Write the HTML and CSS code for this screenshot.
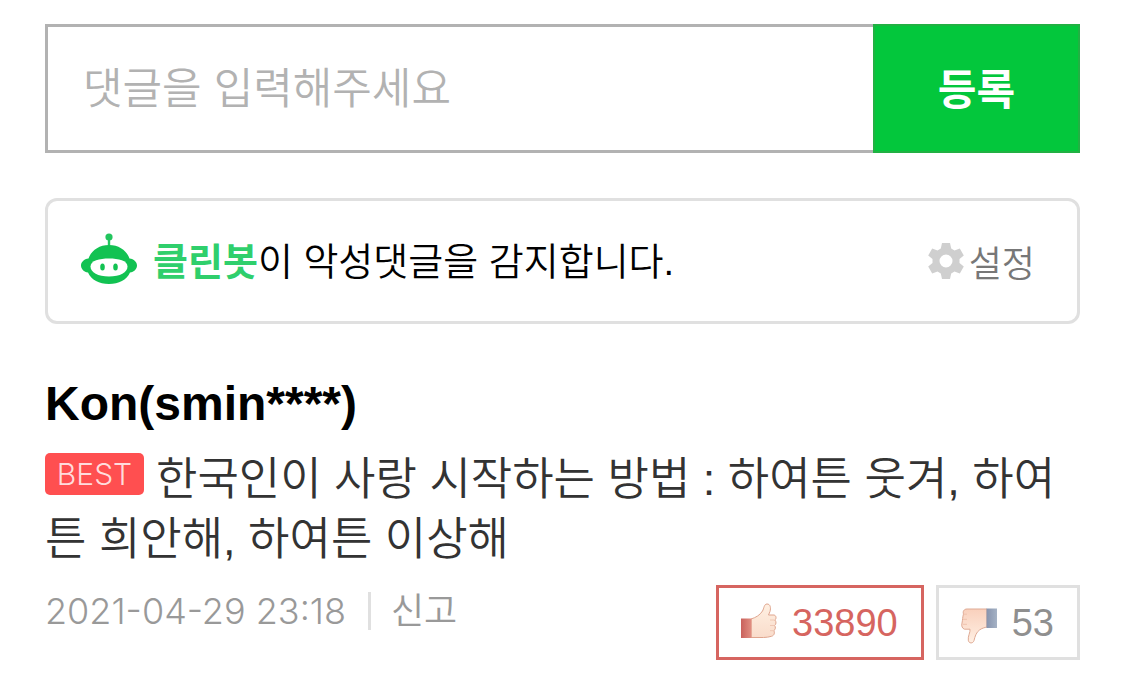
FILE: index.html
```html
<!DOCTYPE html>
<html lang="ko">
<head>
<meta charset="utf-8">
<meta name="viewport" content="width=device-width, initial-scale=1">
<title>댓글</title>
<link rel="stylesheet" href="styles.css">
</head>
<body>
<main class="comments">
  <form class="write">
    <input class="write-input" type="text" placeholder="댓글을 입력해주세요" aria-label="댓글">
    <button class="write-submit" type="button">등록</button>
  </form>

  <section class="cleanbot">
    <svg class="bot-icon" viewBox="0 0 58 52" aria-hidden="true">
      <circle cx="29" cy="4" r="3.6" fill="#22c55e"/>
      <path d="M29 5v10" stroke="#22c55e" stroke-width="2.4"/>
      <path d="M29 12c10.500 0 18 6 20.500 13.500 4.500.5 7.500 3.500 7.500 7s-3 6.500-7 7C46.500 47 39 51 29 51S11.500 47 8 39.500c-4-.5-7-3.500-7-7s3-6.500 7.500-7C11 18 18.500 12 29 12z" fill="#12c252"/>
      <path d="M29 25.500c9.500 0 18.500 2 18.500 8S40 43.500 29 43.500 10.500 39.500 10.500 33.500s9-8 18.500-8z" fill="#fff"/>
      <ellipse cx="22.500" cy="34" rx="2.300" ry="3.600" fill="#12c252"/>
      <ellipse cx="35.500" cy="34" rx="2.300" ry="3.600" fill="#12c252"/>
    </svg>
    <p class="cleanbot-text"><strong class="cleanbot-name">클린봇</strong>이 악성댓글을 감지합니다.</p>
    <button class="settings" type="button">
      <svg class="gear-icon" viewBox="0 0 36 38" aria-hidden="true">
        <path fill="#cfcfcf" fill-rule="evenodd" d="M14 1h8l1.200 5.600 3.300 1.900 5.300-1.900 4 7-4.300 3.500v3.800l4.300 3.500-4 7-5.300-1.900-3.300 1.900L22 37h-8l-1.200-5.600-3.300-1.900-5.300 1.900-4-7 4.300-3.500v-3.800L.2 13.600l4-7 5.300 1.900 3.300-1.900zM18 12.500a6.500 6.500 0 1 0 0 13 6.500 6.500 0 0 0 0-13z"/>
      </svg>
      <span>설정</span>
    </button>
  </section>

  <article class="comment">
    <h2 class="author">Kon(smin****)</h2>
    <p class="body"><span class="best">BEST</span>한국인이 사랑 시작하는 방법 : 하여튼 웃겨, 하여튼 희안해, 하여튼 이상해</p>
    <footer class="meta">
      <div class="info">
        <time class="date" datetime="2021-04-29T23:18">2021-04-29 23:18</time>
        <button class="report" type="button">신고</button>
      </div>
      <div class="votes">
        <button class="vote vote-up" type="button" aria-label="공감 33890">
          <svg class="thumb" viewBox="0 0 36 36" aria-hidden="true">
            <defs>
              <linearGradient id="cuff-up"><stop offset="0" stop-color="#c9615c"/><stop offset="1" stop-color="#e18f82"/></linearGradient>
              <linearGradient id="skin-up" x1="0" y1="0" x2="0" y2="1"><stop offset="0" stop-color="#fff0e2"/><stop offset="1" stop-color="#f9dccb"/></linearGradient>
            </defs>
            <path d="M10 16c5-1.500 9-4 11.500-8C23 5.500 23 1 26 1c3.500 0 4 4 3 7.500L27.500 12H33c2.500.5 2.600 4 .8 5 1.700 1.500 1.500 4.500-.2 5.400 1.300 1.700.9 4.300-.7 5.200 1 2 .5 4.900-2.400 5.700-2.500.7-5 1.200-8 1.200H10z" fill="url(#skin-up)" stroke="#dfa58e"/>
            <path d="M29 17h4.500M29 22.500h4.500M29 27.700h4" fill="none" stroke="#efc7b4"/>
            <path d="M0 15.500h10.500v19.500H0z" fill="url(#cuff-up)"/>
          </svg>
          <span>33890</span>
        </button>
        <button class="vote vote-down" type="button" aria-label="비공감 53">
          <svg class="thumb" viewBox="0 0 36 36" aria-hidden="true">
            <defs>
              <linearGradient id="cuff-down"><stop offset="0" stop-color="#8793ad"/><stop offset="1" stop-color="#a5b2c5"/></linearGradient>
              <linearGradient id="skin-down" x1="0" y1="0" x2="0" y2="1"><stop offset="0" stop-color="#f9d0bc"/><stop offset="1" stop-color="#fff0e4"/></linearGradient>
            </defs>
            <path d="M26 1H6C3 1 1.500 3.500 2.500 6 1.500 9 1.700 12 1 15c-.8 3 .2 5.500 2.500 6.200H9c.5 3-2.300 7-1.700 11 .4 3.500 4.700 3.600 5.700.4 1-4 2-8 5.500-10.600 2.300-1.700 5-2.500 7.500-3z" fill="url(#skin-down)" stroke="#dfaa94"/>
            <path d="M2.500 6.200H6M2 11.300h4M2 16.300h4" fill="none" stroke="#efc2ae"/>
            <path d="M25.500.5H36V20H25.500z" fill="url(#cuff-down)"/>
          </svg>
          <span>53</span>
        </button>
      </div>
    </footer>
  </article>
</main>
</body>
</html>
```
FILE: styles.css
```css
* {
  box-sizing: border-box;
}

body {
  margin: 0;
  background: #fff;
  color: #333;
  font-family: "Liberation Sans", "Noto Sans CJK KR", sans-serif;
}

button {
  margin: 0;
  padding: 0;
  border: 0;
  background: none;
  font: inherit;
  color: inherit;
}

.comments {
  padding: 24px 43px 24px 45px;
}

.write {
  display: flex;
  height: 129px;
}

.write-input {
  flex: 1;
  min-width: 0;
  padding: 2px 35px 0;
  border: 3px solid #b2b2b2;
  border-right: 0;
  border-radius: 0;
  font-family: inherit;
  font-size: 43px;
  font-weight: 350;
}

.write-input::placeholder {
  color: #b2b2b2;
  opacity: 1;
}

.write-submit {
  width: 207px;
  padding-bottom: 4px;
  border: 2px solid #21b143;
  background: #03c73c;
  color: #fff;
  font-size: 42px;
  font-weight: 700;
}

.cleanbot {
  display: flex;
  align-items: center;
  height: 126px;
  margin-top: 45px;
  padding: 0 42px 0 32px;
  border: 3px solid #e0e0e0;
  border-radius: 12px;
}

.bot-icon {
  width: 58px;
  height: 52px;
  margin-right: 15px;
  margin-bottom: 5px;
}

.cleanbot-text {
  flex: 1;
  margin: 0;
  padding-bottom: 6px;
  color: #000;
  font-size: 38px;
  font-weight: 350;
}

.cleanbot-name {
  color: #2fcf6c;
  font-weight: 700;
}

.settings {
  display: flex;
  align-items: center;
  gap: 5px;
  color: #777;
  font-size: 36px;
  font-weight: 350;
}

.gear-icon {
  width: 36px;
  height: 38px;
}

.comment {
  margin-top: 50px;
}

.author {
  margin: 0;
  color: #000;
  font-size: 48px;
  font-weight: 700;
  line-height: 60px;
}

.body {
  margin: 16px 0 0;
  font-size: 45px;
  font-weight: 350;
  line-height: 60px;
}

.best {
  display: inline-block;
  width: 99px;
  height: 42px;
  margin: 3px 12px 0 0;
  border-radius: 5px;
  background: #ff4f50;
  color: #ffdcdc;
  font-family: Inter, sans-serif;
  font-size: 30px;
  font-weight: 300;
  line-height: 42px;
  text-align: center;
  vertical-align: top;
}

.meta {
  display: flex;
  justify-content: space-between;
  align-items: flex-start;
  margin-top: 15px;
}

.info {
  display: flex;
  align-items: center;
  height: 52px;
  color: #999;
}

.date {
  font-family: Inter, sans-serif;
  font-size: 36px;
  font-weight: 300;
}

.report {
  margin-left: 22px;
  padding: 2px 0 0 20px;
  border-left: 3px solid #e0e0e0;
  font-size: 36px;
  font-weight: 350;
  line-height: 36px;
}

.votes {
  display: flex;
  gap: 12px;
}

.vote {
  display: flex;
  align-items: center;
  gap: 15px;
  height: 75px;
  padding: 2px 23px 0 22px;
  border: 3px solid #e0e0e0;
  color: #8f8f8f;
  font-size: 38px;
}

.vote-up {
  border-color: #d66560;
  color: #d66560;
}

.thumb {
  width: 36px;
  height: 36px;
}

.vote-up .thumb {
  margin-bottom: 6px;
}

.vote-down .thumb {
  margin-top: 4px;
}
```
